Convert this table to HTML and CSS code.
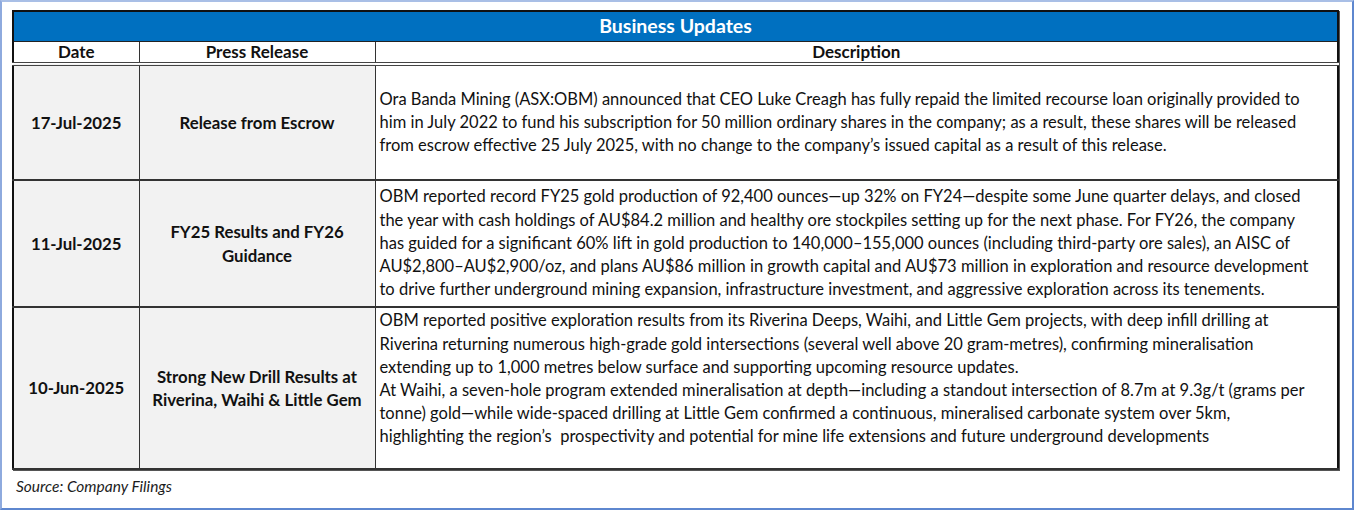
FILE: index.html
```html
<!DOCTYPE html>
<html lang="en">
<head>
<meta charset="utf-8">
<title>Business Updates</title>
<link rel="stylesheet" href="styles.css">
</head>
<body>
<div class="frame">
  <table class="updates">
    <colgroup>
      <col class="c-date">
      <col class="c-press">
      <col class="c-desc">
    </colgroup>
    <thead>
      <tr><th colspan="3" class="title">Business Updates</th></tr>
      <tr class="cols">
        <th>Date</th>
        <th>Press Release</th>
        <th>Description</th>
      </tr>
    </thead>
    <tbody>
      <tr class="r1">
        <td class="date">17-Jul-2025</td>
        <td class="press">Release from Escrow</td>
        <td class="desc">Ora Banda Mining (ASX:OBM) announced that CEO Luke Creagh has fully repaid the limited recourse loan originally provided to<br>him in July 2022 to fund his subscription for 50 million ordinary shares in the company; as a result, these shares will be released<br>from escrow effective 25 July 2025, with no change to the company’s issued capital as a result of this release.</td>
      </tr>
      <tr class="r2">
        <td class="date">11-Jul-2025</td>
        <td class="press">FY25 Results and FY26<br>Guidance</td>
        <td class="desc">OBM reported record FY25 gold production of 92,400 ounces—up 32% on FY24—despite some June quarter delays, and closed<br>the year with cash holdings of AU$84.2 million and healthy ore stockpiles setting up for the next phase. For FY26, the company<br>has guided for a significant 60% lift in gold production to 140,000–155,000 ounces (including third-party ore sales), an AISC of<br>AU$2,800–AU$2,900/oz, and plans AU$86 million in growth capital and AU$73 million in exploration and resource development<br>to drive further underground mining expansion, infrastructure investment, and aggressive exploration across its tenements.</td>
      </tr>
      <tr class="r3">
        <td class="date">10-Jun-2025</td>
        <td class="press">Strong New Drill Results at<br>Riverina, Waihi &amp; Little Gem</td>
        <td class="desc desc-top">OBM reported positive exploration results from its Riverina Deeps, Waihi, and Little Gem projects, with deep infill drilling at<br>Riverina returning numerous high-grade gold intersections (several well above 20 gram-metres), confirming mineralisation<br>extending up to 1,000 metres below surface and supporting upcoming resource updates.<br>At Waihi, a seven-hole program extended mineralisation at depth—including a standout intersection of 8.7m at 9.3g/t (grams per<br>tonne) gold—while wide-spaced drilling at Little Gem confirmed a continuous, mineralised carbonate system over 5km,<br>highlighting the region’s&nbsp; prospectivity and potential for mine life extensions and future underground developments</td>
      </tr>
    </tbody>
  </table>
  <p class="source">Source: Company Filings</p>
</div>
</body>
</html>
```
FILE: styles.css
```css
* { box-sizing: border-box; }
html, body { margin: 0; padding: 0; background: #ffffff; }
body {
  width: 1354px;
  height: 510px;
  font-family: Lato, "Open Sans", "Liberation Sans", sans-serif;
  color: #111111;
}
.frame {
  width: 1354px;
  height: 510px;
  border: 2px solid #5e87cf;
  border-top-color: #a9bfe6;
  border-left-color: #8eaade;
  padding: 8px 0 0 10px;
}
.updates {
  width: 1325px;
  border-collapse: collapse;
  table-layout: fixed;
  border: 2px solid #111111;
  box-shadow: 1px 1px 0 #555;
}
.c-date { width: 126px; }
.c-press { width: 236px; }
.c-desc { width: 963px; }

.title {
  background: #0070c0;
  color: #ffffff;
  font-size: 19.5px;
  line-height: 22px;
  font-weight: 700;
  height: 30px;
  padding: 0;
  text-align: center;
  border-bottom: 1px solid #222;
}
.cols th {
  font-size: 17px;
  line-height: 18px;
  font-weight: 700;
  height: 23px;
  padding: 1px 0 1px;
  text-align: center;
  background: #ffffff;
  border-left: 1px solid #333;
  border-right: 1px solid #333;
  border-bottom: 4px double #444;
}
.updates td {
  border: 1px solid #333;
  border-width: 1px 1px 2px 1px;
  vertical-align: middle;
  font-size: 16.5px;
  line-height: 23.2px;
}
.date, .press {
  background: #f2f2f2;
  font-weight: 700;
  text-align: center;
  padding: 0 2px;
}
.updates .date, .updates .press { font-size: 16.8px; }
.press { line-height: 24px; }
.desc {
  background: #ffffff;
  padding: 0 4px 0 4px;
  white-space: nowrap;
}
.r1 td { height: 116px; }
.r2 td { height: 127px; }
.r3 td { height: 162px; }
.desc-top { padding-bottom: 18px; }
.source {
  margin: 7px 0 0 4px;
  font-size: 15.5px;
  font-style: italic;
  color: #1c1c1c;
}
```
